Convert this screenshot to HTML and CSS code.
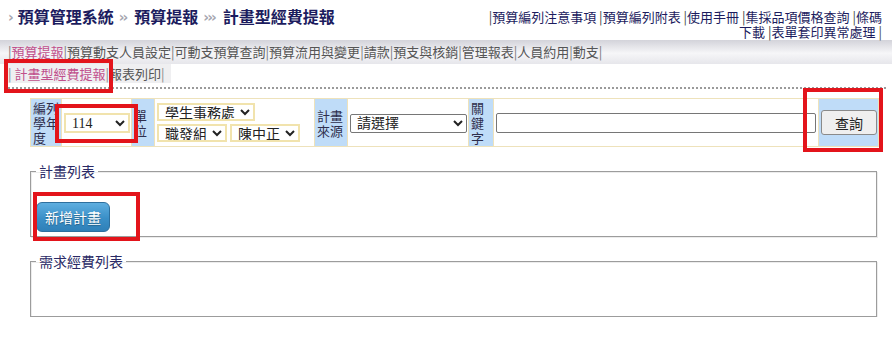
FILE: index.html
```html
<!DOCTYPE html>
<html lang="zh-Hant">
<head>
    <meta charset="UTF-8">
    <title>計畫型經費提報</title>
    <link rel="stylesheet" href="styles.css">
</head>
<body>

<div class="top">
    <h1 class="title"><span class="arr arr-first">›</span>預算管理系統<span class="arr">››</span>預算提報<span class="arr">›››</span>計畫型經費提報</h1>
    <div class="links">|<a href="#">預算編列注意事項</a> |<a href="#">預算編列附表</a> |<a href="#">使用手冊</a> |<a href="#">集採品項價格查詢</a> |<a href="#">條碼下載</a> |<a href="#">表單套印異常處理</a> |</div>
</div>

<div class="menu">|<a href="#" class="on">預算提報</a>|<a href="#">預算動支人員設定</a>|<a href="#">可動支預算查詢</a>|<a href="#">預算流用與變更</a>|<a href="#">請款</a>|<a href="#">預支與核銷</a>|<a href="#">管理報表</a>|<a href="#">人員約用</a>|<a href="#">動支</a>|</div>

<div class="submenu"><span class="sub-items">| <a href="#" class="on">計畫型經費提報</a>|<a href="#">報表列印</a>|</span></div>

<div class="dots"></div>

<div class="content">
    <table class="query">
        <colgroup>
            <col style="width:31px"><col style="width:70px"><col style="width:23px"><col style="width:160px">
            <col style="width:33px"><col style="width:121px"><col style="width:25px"><col style="width:325px"><col style="width:60px">
        </colgroup>
        <tr>
            <td class="lbl">編列學年度</td>
            <td><select class="sel yel sel-year"><option>114</option></select></td>
            <td class="lbl">單位</td>
            <td>
                <div class="unit-row"><select class="sel yel"><option>學生事務處</option></select></div>
                <div class="unit-row"><select class="sel yel"><option>職發組</option></select> <select class="sel yel"><option>陳中正</option></select></div>
            </td>
            <td class="lbl">計畫來源</td>
            <td><select class="sel sel-src"><option>請選擇</option></select></td>
            <td class="lbl">關鍵字</td>
            <td><input type="text" class="keyword"></td>
            <td class="lbl btn-cell"><button class="btn-query">查詢</button></td>
        </tr>
    </table>

    <fieldset class="box box-plan">
        <legend>計畫列表</legend>
        <button class="btn-add">新增計畫</button>
    </fieldset>

    <fieldset class="box box-need">
        <legend>需求經費列表</legend>
        <div class="empty"></div>
    </fieldset>
</div>

<!-- annotation frames -->
<div class="mark mark-tab"></div>
<div class="mark mark-year"></div>
<div class="mark mark-query"></div>
<div class="mark mark-add"></div>

</body>
</html>
```

FILE: styles.css
```css
body {
    margin: 0;
    font-family: "Noto Sans CJK TC", sans-serif;
    font-size: 13px;
    color: #333;
    background: #fff;
    position: relative;
}

a {
    text-decoration: none;
    color: inherit;
}

/* header */
.top {
    display: flex;
    justify-content: space-between;
    align-items: flex-start;
    height: 40px;
}

.title {
    margin: 0;
    padding: 5px 0 0 6px;
    font-size: 16px;
    line-height: 22px;
    font-weight: bold;
    color: #1c1c5e;
}

.arr {
    font-family: "DejaVu Sans", sans-serif;
    font-size: 14px;
    font-weight: bold;
    color: #a6a6b0;
    margin: 0 8px 0 5px;
    letter-spacing: -2px;
    position: relative;
    top: -1px;
}

.arr-first {
    margin: 0 6px 0 2px;
}

.links {
    width: 404px;
    margin: 9px 10px 0 0;
    text-align: right;
    line-height: 15px;
    color: #444;
}

.links a {
    color: #1c1c5e;
}

/* menu */
.menu {
    height: 24px;
    line-height: 24px;
    padding-left: 8px;
    color: #777;
    background: linear-gradient(to bottom, #d3d3da 0%, #f6f6f8 55%, #e6e6eb 100%);
}

.menu a {
    color: #555;
}

.menu a.on,
.submenu a.on {
    color: #c0508c;
}

.submenu {
    padding-left: 8px;
    height: 19px;
    line-height: 19px;
}

.sub-items {
    display: inline-block;
    background: #efeff1;
    padding-right: 6px;
    color: #888;
}

.sub-items a {
    color: #555;
}

.dots {
    margin: 4px 6px 0 8px;
    border-top: 2px dotted #9a9a9a;
}

/* query table */
.content {
    margin: 9px 14px 0 30px;
}

.query {
    width: 848px;
    table-layout: fixed;
    border-collapse: collapse;
    border: 1px solid #eee2bb;
}

.query td {
    border: 1px solid #eee2bb;
    padding: 1px 2px;
    vertical-align: middle;
    background: #fff;
}

.query td.lbl {
    background: #bfdcf8;
    color: #2e2e4c;
    line-height: 15px;
}

.sel {
    font-family: "Liberation Serif", "Noto Sans CJK TC", serif;
    font-size: 14px;
    height: 19px;
    padding: 0 2px;
    color: #222;
    background: #fff;
    border: 1px solid #767676;
    border-radius: 2px;
}

.sel.yel {
    border: 2px solid #f1e3ad;
    border-radius: 0;
}

.sel-year {
    width: 66px;
    height: 20px;
}

.unit-row {
    margin: 2px 0;
}

.unit-row .sel {
    height: 18px;
}

.sel-src {
    width: 117px;
    height: 19px;
}

.keyword {
    width: 314px;
    height: 16px;
    border: 1px solid #767676;
    border-radius: 2px;
    padding: 1px 2px;
}

.btn-cell {
    text-align: center;
}

.btn-query {
    font-family: "Noto Sans CJK TC", sans-serif;
    font-size: 14px;
    width: 56px;
    height: 25px;
    padding: 0;
    color: #222;
    background: #efefef;
    border: 1px solid #8a8a8a;
    border-radius: 3px;
}

/* fieldsets */
.box {
    margin: 16px 1px 0 0;
    padding: 0 5px 4px;
    border: 1px solid #9c9c9c;
    box-shadow: inset 1px 1px 0 #ececec, 1px 1px 0 #ececec;
}

.box legend {
    font-size: 14px;
    line-height: 16px;
    padding: 0 3px;
    color: #2a2a66;
}

.btn-add {
    margin-top: 23px;
    width: 74px;
    height: 30px;
    font-family: "Noto Sans CJK TC", sans-serif;
    font-size: 14px;
    color: #fff;
    background: linear-gradient(to bottom, #5eaee0 0%, #3a8fc7 55%, #2f80b8 100%);
    border: 1px solid #2d6f9e;
    border-radius: 6px;
    text-shadow: 0 1px 1px rgba(0, 0, 0, 0.3);
}

.empty {
    height: 43px;
}

/* red annotation frames */
.mark {
    position: absolute;
    box-sizing: border-box;
    border: 4px solid #e3141b;
}

.mark-tab { left: 4px; top: 59px; width: 109px; height: 34px; }
.mark-year { left: 55px; top: 104px; width: 83px; height: 39px; }
.mark-query { left: 803px; top: 88px; width: 80px; height: 64px; }
.mark-add { left: 33px; top: 192px; width: 107px; height: 49px; }
```
